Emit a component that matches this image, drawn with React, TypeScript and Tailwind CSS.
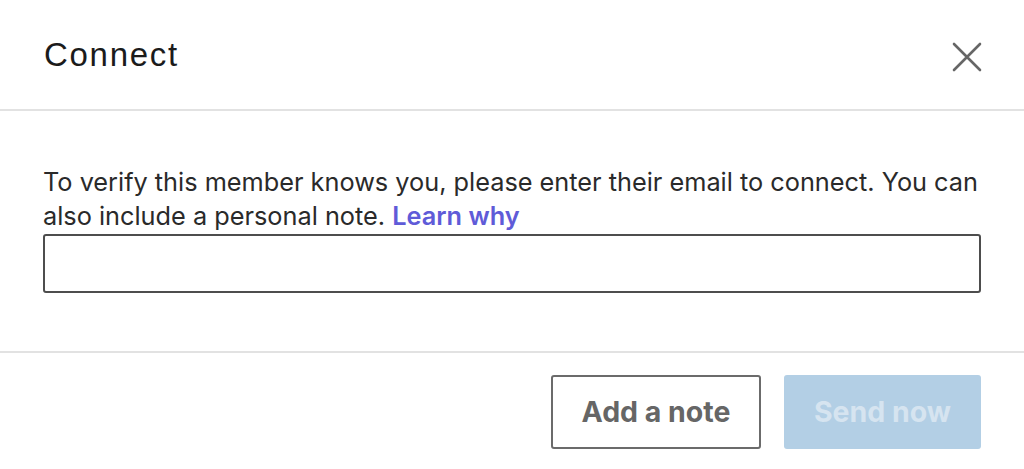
export default function App() {
  return (
    <div className="w-[1024px] h-[469px] bg-white flex flex-col overflow-hidden font-['Inter',sans-serif] text-[#1f1f1f]">
      <header className="h-[111px] shrink-0 border-b-2 border-[#e2e2e2] flex items-start justify-between pl-[44px] pr-[42px] pt-[35px]">
        <h1 className="font-['Liberation_Sans',Arial,sans-serif] text-[33px] leading-[40px] tracking-[1.7px] text-[#1b1b1b]">
          Connect
        </h1>
        <button className="mt-[7px] w-[30px] h-[30px] flex items-center justify-center text-[#666666]">
          <svg viewBox="0 0 30 30" className="w-[30px] h-[30px]" fill="none" stroke="currentColor" strokeWidth="2.6" strokeLinecap="round">
            <path d="M2 2 L28 28 M28 2 L2 28" />
          </svg>
        </button>
      </header>

      <section className="h-[242px] shrink-0 border-b-2 border-[#e2e2e2] px-[43px] pt-[54px]">
        <p className="text-[25.3px] leading-[34px] text-[#2a2a2a]">
          To verify this member knows you, please enter their email to connect. You can also include a personal note.{" "}
          <a href="#" className="font-semibold text-[#5f5bd8]">
            Learn why
          </a>
        </p>
        <input
          type="email"
          className="mt-[1px] block w-[938px] h-[59px] rounded-[3px] border-2 border-[#4d4d4d] px-3 text-[22px] outline-none"
        />
      </section>

      <footer className="flex-1 flex justify-end items-start gap-[23px] pt-[22px] pr-[43px]">
        <button className="w-[210px] h-[74px] rounded-[3px] border-2 border-[#6b6b6b] text-[28.5px] font-bold text-[#666666]">
          Add a note
        </button>
        <button disabled className="w-[197px] h-[74px] rounded-[3px] bg-[#b3cfe5] text-[28.5px] font-bold text-[#d6e4f0]">
          Send now
        </button>
      </footer>
    </div>
  );
}
